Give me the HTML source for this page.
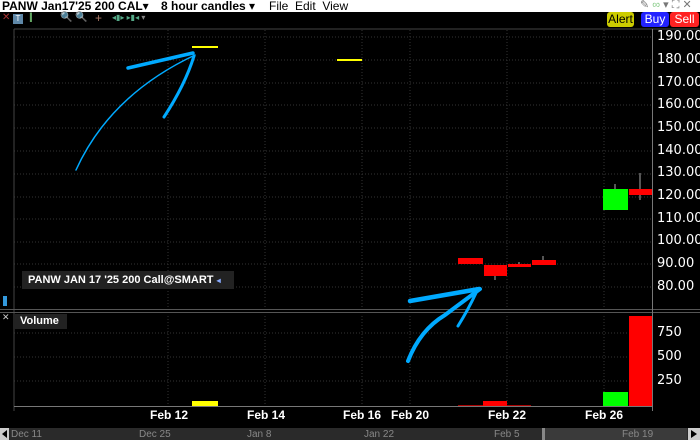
<!DOCTYPE html>
<html><head><meta charset="utf-8"><style>
*{margin:0;padding:0;box-sizing:border-box}
body{width:700px;height:440px;background:#000;overflow:hidden;position:relative;font-family:"Liberation Sans","DejaVu Sans",sans-serif}
.abs{position:absolute}
.menu{top:0;left:0;width:700px;height:12px;background:#fff;color:#000;font-size:12px;line-height:12px;font-weight:bold;white-space:nowrap}
.ax{color:#fff;font-size:13px;left:657px;font-family:"DejaVu Sans","Liberation Sans",sans-serif}
.xl{color:#fff;font-size:12px;top:408px;font-weight:bold}
.sl{color:#888;font-size:10px;top:429px}
</style></head><body>
<div class="abs menu"><span style="position:absolute;left:2px">PANW Jan17'25 200 CAL▾</span>
<span style="position:absolute;left:161px">8 hour candles ▾</span>
<span style="position:absolute;left:269px;font-weight:normal">File&nbsp; Edit&nbsp; View</span>
<span style="position:absolute;left:640px;top:-1px;color:#777;font-weight:normal;font-size:11px">✎ <span style="color:#8c8">∞</span> ▾ ⛶ ✕</span></div>
<div class="abs" style="left:2px;top:12px;color:#a33;font-size:10px">✕</div>
<div class="abs" style="left:13px;top:14px;width:10px;height:10px;background:#5f88a8;color:#fff;font-size:8px;text-align:center;line-height:10px">T</div>
<div class="abs" style="left:29px;top:12px;color:#6a6;font-size:10px;letter-spacing:-2px">|||</div>
<div class="abs" style="left:60px;top:12px;color:#999;font-size:10px">🔍 🔍</div>
<div class="abs" style="left:95px;top:11px;color:#a76;font-size:12px">+</div>
<div class="abs" style="left:112px;top:13px;color:#5a8;font-size:8px">◂▮▸ ▸▮◂ <span style="color:#888">▾</span></div>
<div class="abs" style="left:607px;top:12px;width:27px;height:15px;background:#cc0;border-radius:3px;font-size:12px;text-align:center;line-height:15px">Alert</div>
<div class="abs" style="left:641px;top:12px;width:28px;height:15px;background:#22f;color:#fff;border-radius:3px;font-size:12px;text-align:center;line-height:15px">Buy</div>
<div class="abs" style="left:670px;top:12px;width:29px;height:15px;background:#f22;color:#fff;border-radius:3px;font-size:12px;text-align:center;line-height:15px">Sell</div>
<svg class="abs" style="left:0;top:0" width="700" height="440">
<g stroke="#333" stroke-dasharray="1,2" stroke-width="1">
<path d="M14 37H652M14 60H652M14 83H652M14 105H652M14 128H652M14 151H652M14 174H652M14 197H652M14 219H652M14 242H652M14 264H652M14 287H652"/>
<path d="M14 333H652M14 357H652M14 381H652"/>
<path d="M168 30V308M265 30V308M362 30V308M410 30V308M507 30V308M604 30V308M168 316V406M265 316V406M362 316V406M410 316V406M507 316V406M604 316V406"/>
</g>
<path d="M14 29H700M14 29V411" stroke="#444" fill="none"/>
<path d="M0 309.5H700M0 312.5H700" stroke="#555"/>
<path d="M652.5 29V411M14 406.5H652" stroke="#777"/>
<path d="M192 47H218M337 60H362" stroke="#ff0" stroke-width="2"/>
<rect x="458" y="258" width="25" height="6" fill="#f00"/>
<path d="M495 276V280M519 262V265M543 256V261M615 184V189M640 173V200" stroke="#aaa"/>
<rect x="484" y="265" width="23" height="11" fill="#f00"/>
<rect x="508" y="264" width="23" height="3" fill="#f00"/>
<rect x="532" y="260" width="24" height="5" fill="#f00"/>
<rect x="603" y="189" width="25" height="21" fill="#0f0"/>
<rect x="629" y="189" width="23" height="6" fill="#f00"/>
<rect x="192" y="401" width="26" height="5" fill="#ff0"/>
<rect x="458" y="405" width="25" height="1" fill="#a00"/>
<rect x="483" y="401" width="24" height="5" fill="#f00"/>
<rect x="507" y="405" width="24" height="1" fill="#a00"/>
<rect x="603" y="392" width="25" height="14" fill="#0f0"/>
<rect x="629" y="316" width="23" height="90" fill="#f00"/>
<g stroke="#0af" fill="none" stroke-linecap="round">
<path d="M76 170Q110 95 195 55" stroke-width="1.5"/>
<path d="M128 68L193 53" stroke-width="3.5"/>
<path d="M164 117Q185 85 194 56" stroke-width="3"/>
<path d="M408 361Q420 330 445 315Q465 300 480 289" stroke-width="4"/>
<path d="M410 301L479 289" stroke-width="4.5"/>
<path d="M458 326Q468 310 476 293" stroke-width="3"/>
</g>
<rect x="0" y="428" width="700" height="12" fill="#2a2a2a"/>
<rect x="542" y="428" width="145" height="12" fill="#3a3a3a"/>
<rect x="542" y="428" width="3" height="12" fill="#888"/>
<rect x="0" y="428" width="9" height="12" fill="#ccc"/><path d="M7 430L2 434L7 438Z" fill="#000"/>
<rect x="688" y="428" width="12" height="12" fill="#ccc"/><path d="M691 430L697 434L691 438Z" fill="#000"/>
<rect x="0" y="411" width="700" height="17" fill="#000"/>
</svg>
<div class="abs ax" style="top:29px">190.00</div>
<div class="abs ax" style="top:52px">180.00</div>
<div class="abs ax" style="top:75px">170.00</div>
<div class="abs ax" style="top:97px">160.00</div>
<div class="abs ax" style="top:120px">150.00</div>
<div class="abs ax" style="top:143px">140.00</div>
<div class="abs ax" style="top:165px">130.00</div>
<div class="abs ax" style="top:188px">120.00</div>
<div class="abs ax" style="top:211px">110.00</div>
<div class="abs ax" style="top:233px">100.00</div>
<div class="abs ax" style="top:256px">90.00</div>
<div class="abs ax" style="top:279px">80.00</div>
<div class="abs ax" style="top:325px">750</div>
<div class="abs ax" style="top:349px">500</div>
<div class="abs ax" style="top:373px">250</div>
<div class="abs xl" style="left:150px">Feb 12</div>
<div class="abs xl" style="left:247px">Feb 14</div>
<div class="abs xl" style="left:343px">Feb 16</div>
<div class="abs xl" style="left:391px">Feb 20</div>
<div class="abs xl" style="left:488px">Feb 22</div>
<div class="abs xl" style="left:585px">Feb 26</div>
<div class="abs sl" style="left:11px">Dec 11</div>
<div class="abs sl" style="left:139px">Dec 25</div>
<div class="abs sl" style="left:247px">Jan 8</div>
<div class="abs sl" style="left:364px">Jan 22</div>
<div class="abs sl" style="left:494px">Feb 5</div>
<div class="abs sl" style="left:622px">Feb 19</div>
<div class="abs" style="left:22px;top:271px;width:212px;height:18px;background:#222;color:#fff;font-size:11px;font-weight:bold;line-height:18px;padding-left:6px;white-space:nowrap;overflow:hidden;font-family:'Liberation Sans',sans-serif">PANW JAN 17 '25 200 Call@SMART <span style="color:#8af;font-size:8px">◂</span></div>
<div class="abs" style="left:15px;top:314px;width:52px;height:15px;background:#222;color:#fff;font-size:11px;font-weight:bold;line-height:15px;padding-left:5px;font-family:'Liberation Sans',sans-serif">Volume</div>
<div class="abs" style="left:3px;top:296px;width:4px;height:10px;background:#39d"></div>
<div class="abs" style="left:2px;top:312px;color:#ccc;font-size:9px">✕</div>
</body></html>
